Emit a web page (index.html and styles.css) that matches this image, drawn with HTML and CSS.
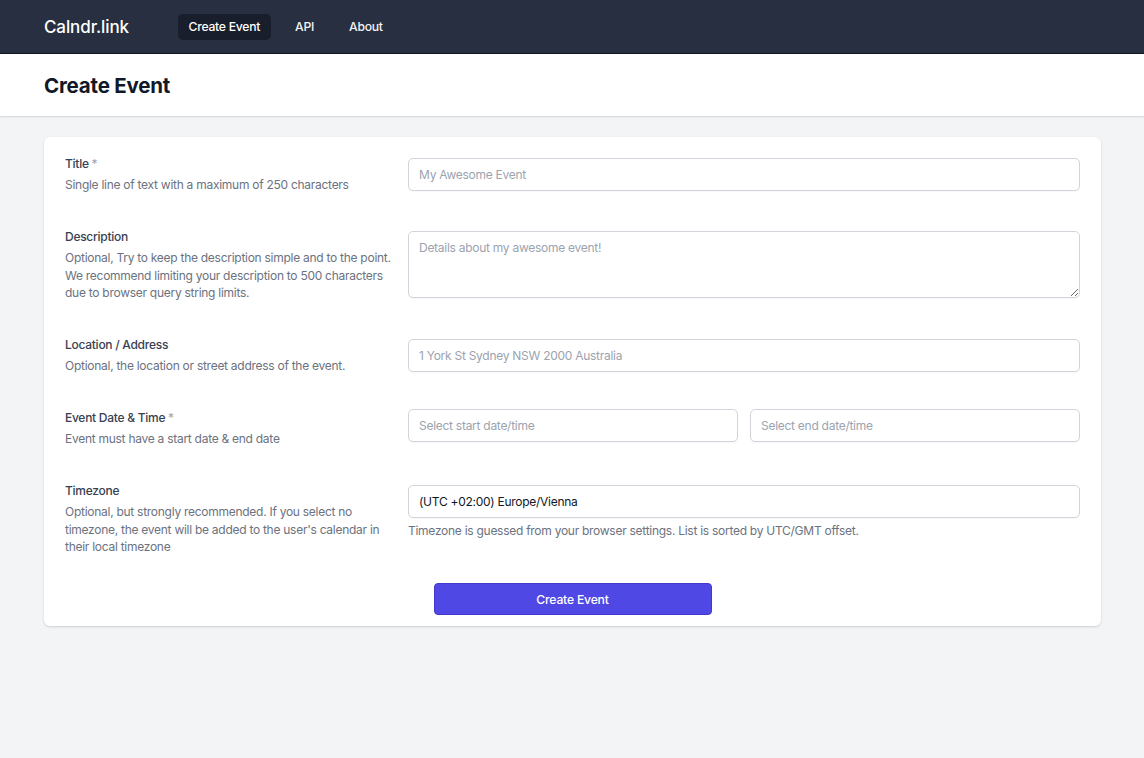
FILE: index.html
```html
<!DOCTYPE html>
<html lang="en">
<head>
<meta charset="utf-8">
<title>Calndr.link</title>
<link rel="stylesheet" href="styles.css">
</head>
<body>
<nav class="nav">
  <div class="brand">Calndr.link</div>
  <div class="links">
    <a class="link active">Create Event</a>
    <a class="link">API</a>
    <a class="link">About</a>
  </div>
</nav>
<header class="header">
  <h1>Create Event</h1>
</header>
<main class="main">
  <form class="card">
    <div class="row">
      <div class="info">
        <div class="label">Title <span class="req">*</span></div>
        <div class="desc">Single line of text with a maximum of 250 characters</div>
      </div>
      <div class="field"><input class="input" placeholder="My Awesome Event"></div>
    </div>
    <div class="row">
      <div class="info">
        <div class="label">Description</div>
        <div class="desc">Optional, Try to keep the description simple and to the point. We recommend limiting your description to 500 characters due to browser query string limits.</div>
      </div>
      <div class="field"><textarea class="input textarea" placeholder="Details about my awesome event!"></textarea></div>
    </div>
    <div class="row">
      <div class="info">
        <div class="label">Location / Address</div>
        <div class="desc">Optional, the location or street address of the event.</div>
      </div>
      <div class="field"><input class="input" placeholder="1 York St Sydney NSW 2000 Australia"></div>
    </div>
    <div class="row">
      <div class="info">
        <div class="label">Event Date &amp; Time <span class="req">*</span></div>
        <div class="desc">Event must have a start date &amp; end date</div>
      </div>
      <div class="field dates">
        <input class="input" placeholder="Select start date/time">
        <input class="input" placeholder="Select end date/time">
      </div>
    </div>
    <div class="row">
      <div class="info">
        <div class="label">Timezone</div>
        <div class="desc">Optional, but strongly recommended. If you select no timezone, the event will be added to the user's calendar in their local timezone</div>
      </div>
      <div class="field">
        <div class="input select">(UTC +02:00) Europe/Vienna</div>
        <div class="help">Timezone is guessed from your browser settings. List is sorted by UTC/GMT offset.</div>
      </div>
    </div>
    <div class="actions">
      <button type="button" class="btn">Create Event</button>
    </div>
  </form>
</main>
</body>
</html>
```

FILE: styles.css
```css
* { box-sizing: border-box; }
html, body { margin: 0; padding: 0; }
body {
  background: #f3f4f6;
  font-family: Inter, "Noto Sans", Arial, sans-serif;
  font-size: 12px;
  letter-spacing: -0.27px;
  color: #374151;
  min-height: 758px;
}
.nav {
  height: 54px;
  background: #272f40;
  border-bottom: 1px solid #11151d;
  display: flex;
  align-items: center;
  padding: 0 44px;
}
.brand {
  color: #fff;
  font-size: 17px;
  font-weight: 500;
  letter-spacing: -0.1px;
  width: 134px;
}
.links { display: flex; gap: 14px; }
.link {
  color: #f3f4f6;
  font-size: 12.2px;
  font-weight: 500;
  padding: 6px 10.5px;
  height: 26px;
  line-height: 14px;
  border-radius: 5px;
}
.link.active { background: #181e2b; color: #fff; }
.header {
  background: #fff;
  height: 62px;
  padding: 0 44px;
  display: flex;
  align-items: center;
  box-shadow: 0 1px 2px rgba(0,0,0,0.08), 0 1px 0 #e5e7eb;
}
.header h1 {
  margin: 0;
  font-size: 20.5px;
  font-weight: 700;
  color: #111827;
  letter-spacing: -0.2px;
  padding-top: 1px;
}
.main { padding: 21px 43px 0 44px; }
.card {
  background: #fff;
  border-radius: 6px;
  box-shadow: 0 1px 3px rgba(0,0,0,0.1), 0 1px 2px rgba(0,0,0,0.06);
  padding: 18px 21px 11px 21px;
  display: flex;
  flex-direction: column;
  gap: 34px;
}
.row {
  display: grid;
  grid-template-columns: 329px 1fr;
  column-gap: 14px;
  align-items: start;
}
.label {
  font-weight: 500;
  color: #374151;
  line-height: 18px;
}
.req { color: #9ca3af; font-weight: 400; }
.desc {
  margin-top: 3px;
  color: #6b7280;
  line-height: 17.8px;
}
.field { padding-top: 3px; }
.input {
  display: block;
  width: 100%;
  height: 33px;
  border: 1px solid #d1d5db;
  border-radius: 5px;
  padding: 0 10px;
  font-family: inherit;
  font-size: 12px;
  letter-spacing: -0.27px;
  color: #111827;
  background: #fff;
  box-shadow: 0 1px 1px rgba(0,0,0,0.03);
  outline: none;
}
.input::placeholder { color: #9ca3af; }
.textarea {
  height: 67px;
  padding: 8px 10px;
  resize: vertical;
  line-height: 16px;
}
.dates { display: flex; gap: 12px; padding-top: 0; }
.select { display: flex; align-items: center; color: #111827; }
.help {
  margin-top: 5px;
  color: #6b7280;
  line-height: 16px;
}
.actions {
  display: flex;
  justify-content: center;
  margin-top: -7px;
}
.btn {
  width: 278px;
  height: 32px;
  background: #5048e5;
  color: #fff;
  border: 1px solid #4338ca;
  border-radius: 4px;
  font-family: inherit;
  font-size: 12.2px;
  letter-spacing: -0.2px;
  font-weight: 500;
}
```
